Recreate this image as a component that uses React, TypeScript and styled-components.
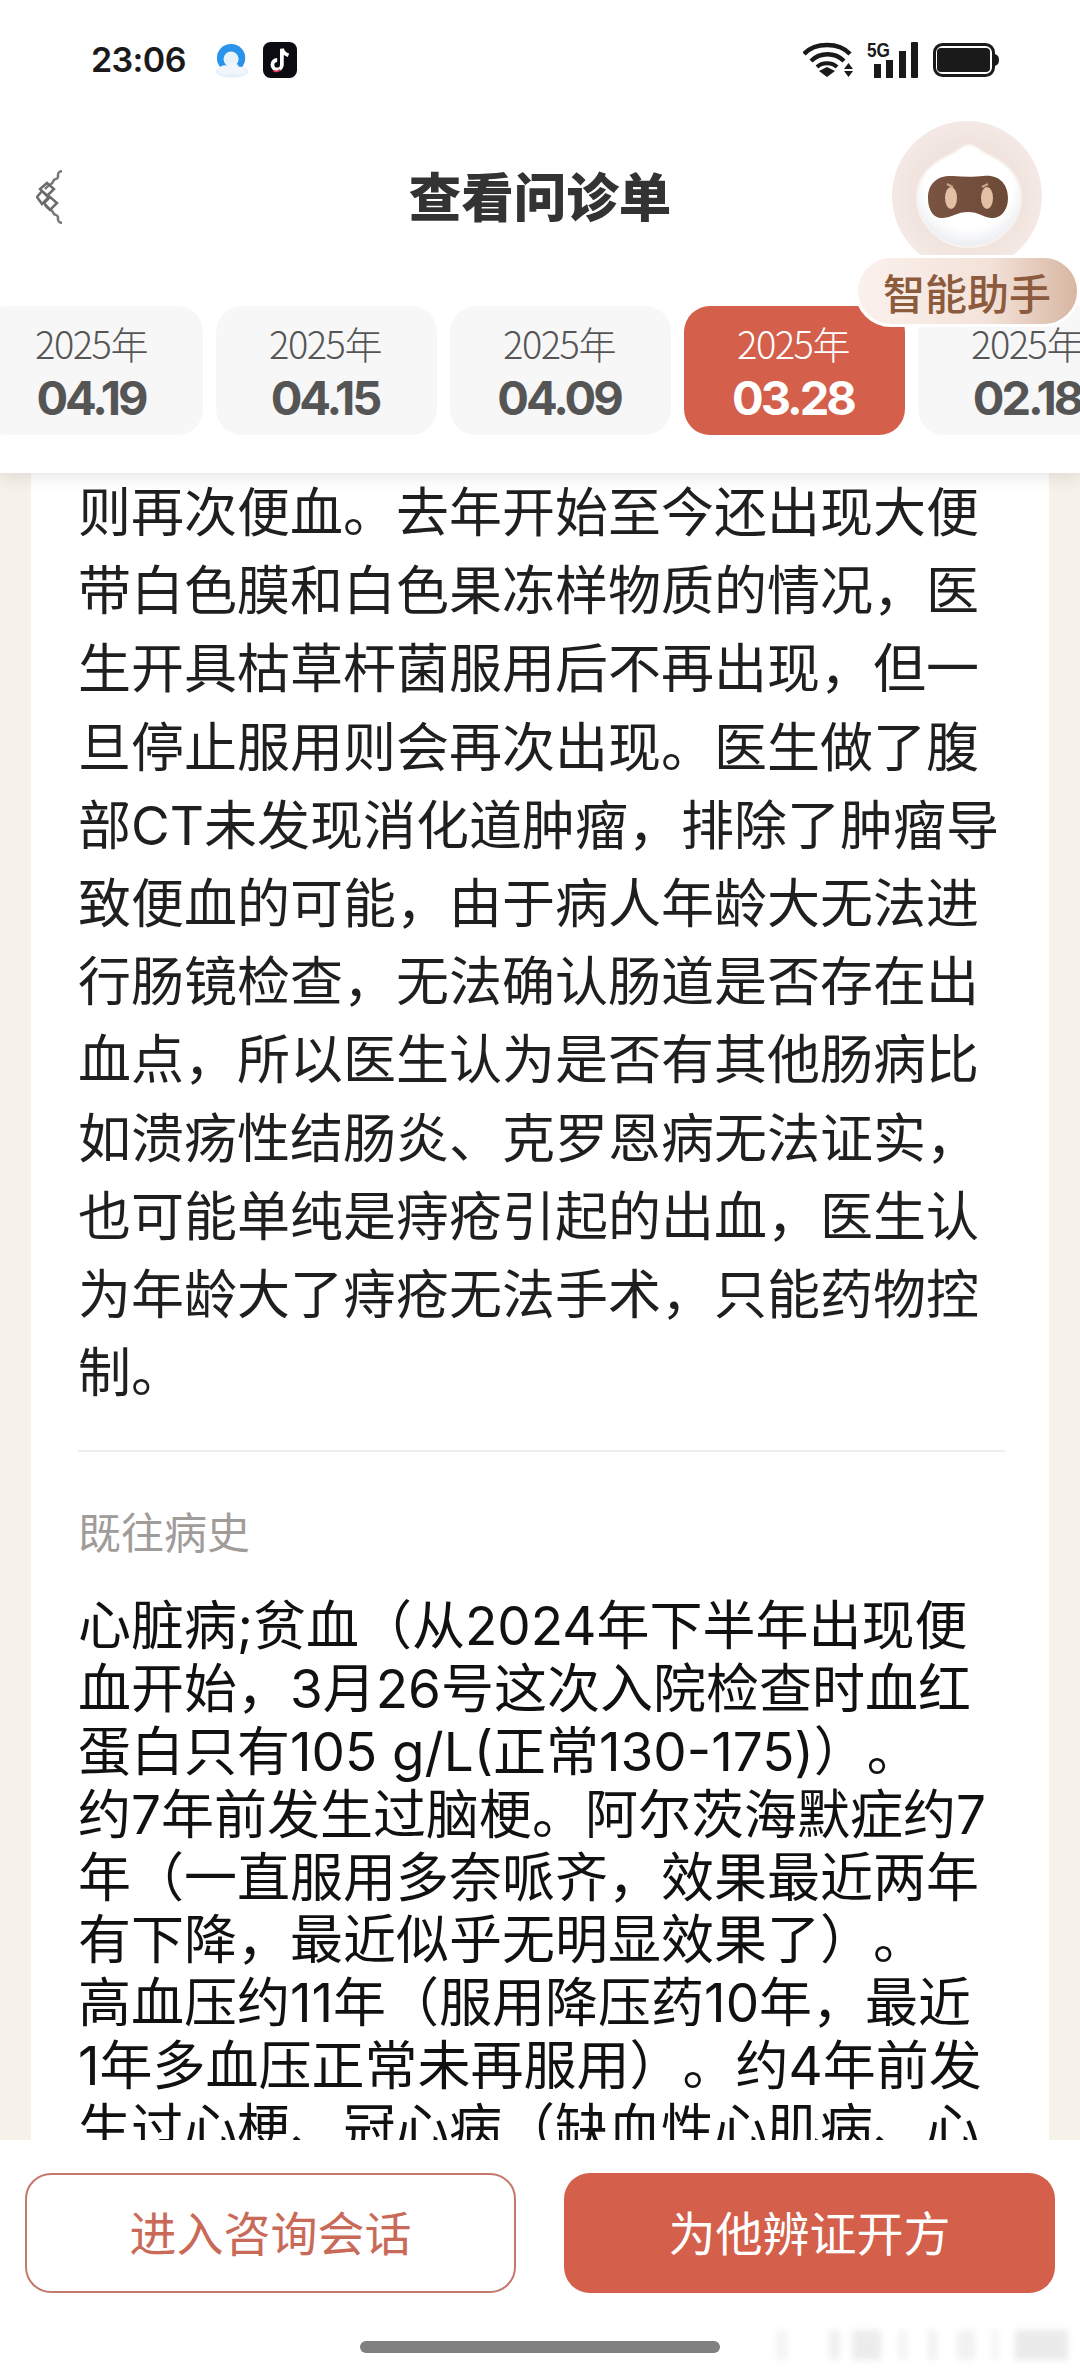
import React from "react";
import styled, { createGlobalStyle } from "styled-components";

const CJK = `"Noto Sans CJK SC", "Noto Sans", sans-serif`;
const BODY = `"Inter", "Noto Sans CJK SC", sans-serif`;
const RED = "#d4604c";

const GlobalStyle = createGlobalStyle`
  html, body {
    margin: 0;
    padding: 0;
    background: #fff;
    font-family: ${CJK};
  }
`;

const Screen = styled.div`
  position: relative;
  width: 1080px;
  height: 2374px;
  overflow: hidden;
  display: flex;
  flex-direction: column;
  background: #f6f2ea;
`;

const TopPanel = styled.div`
  position: relative;
  z-index: 2;
  flex: none;
  height: 473px;
  background: #fff;
  box-shadow: 0 4px 16px rgba(0, 0, 0, 0.1);
`;

const StatusBar = styled.div`
  height: 119px;
  padding: 0 81px 0 91px;
  box-sizing: border-box;
  display: flex;
  align-items: center;
  color: #1a1a1a;
`;

const Time = styled.span`
  font-family: "Inter", sans-serif;
  font-size: 34px;
  font-weight: 600;
  letter-spacing: -0.6px;
  width: 124px;
`;

const StatusApps = styled.div`
  display: flex;
  align-items: center;
  gap: 14px;
`;

const StatusRight = styled.div`
  margin-left: auto;
  display: flex;
  align-items: center;
  gap: 14px;
`;

const Header = styled.div`
  height: 158px;
  padding-bottom: 8px;
  box-sizing: border-box;
  display: grid;
  grid-template-columns: 1fr auto 1fr;
  align-items: center;
`;

const Title = styled.h1`
  margin: 0;
  font-size: 52.5px;
  font-weight: 900;
  color: #333;
  font-family: ${CJK};
`;

const BackIcon = styled.svg`
  margin: 6px 0 0 36px;
  justify-self: start;
`;

const Tabs = styled.div`
  display: flex;
  gap: 13px;
  margin: 29px 0 0 -18px;
  width: 1200px;
`;

const Tab = styled.div<{ $active?: boolean }>`
  flex: none;
  width: 221px;
  height: 129px;
  padding: 5px 3px 0 0;
  box-sizing: border-box;
  border-radius: 26px;
  display: flex;
  flex-direction: column;
  align-items: center;
  justify-content: center;
  background: ${(p) => (p.$active ? RED : "#f7f7f7")};
  color: ${(p) => (p.$active ? "#fff" : "#555")};
`;

const TabYear = styled.span`
  font-size: 38px;
  line-height: 50px;
  letter-spacing: -1.5px;
  font-weight: 300;
`;

const TabDate = styled.span`
  font-family: "Inter", sans-serif;
  font-size: 47px;
  line-height: 60px;
  letter-spacing: -3px;
  font-weight: 700;
`;

const Assistant = styled.div`
  position: absolute;
  z-index: 3;
  left: 854px;
  top: 120px;
  width: 226px;
  display: flex;
  flex-direction: column;
  align-items: center;
`;

const AssistantLabel = styled.div`
  margin-top: -1px;
  width: 225px;
  height: 72px;
  border-radius: 36px;
  border: 3px solid #fff;
  box-sizing: border-box;
  background: linear-gradient(90deg, #fbf1ed 0%, #f3e2d9 60%, #d8b6a2 100%);
  color: #8c5a3c;
  font-size: 42px;
  font-weight: 500;
  display: flex;
  align-items: center;
  justify-content: center;
`;

const Content = styled.main`
  flex: 1;
  min-height: 0;
  margin: 0 31px;
  padding: 0 44px 0 47px;
  background: #fff;
  overflow: hidden;
`;

const Paragraph = styled.p`
  margin: 1px 0 0;
  color: #1f1f1f;
  font-family: ${BODY};
  font-size: 53px;
  line-height: 78.2px;
`;

const Divider = styled.hr`
  margin: 38px 0 0;
  border: 0;
  border-top: 2px solid #eeeeee;
`;

const SectionLabel = styled.div`
  margin-top: 47px;
  height: 62px;
  font-size: 43px;
  line-height: 62px;
  color: #a09c9a;
`;

const HistoryText = styled.p`
  margin: 34px 0 0;
  color: #111;
  font-family: ${BODY};
  font-size: 53px;
  line-height: 62.8px;
  white-space: pre;
  text-spacing-trim: space-all;
`;

const Footer = styled.footer`
  position: relative;
  flex: none;
  height: 234px;
  background: #fff;
  padding-top: 33px;
  box-sizing: border-box;
  display: flex;
  flex-direction: column;
  align-items: center;
`;

const FooterActions = styled.div`
  align-self: stretch;
  padding: 0 25px;
  display: flex;
  justify-content: space-between;
`;

const ActionButton = styled.button<{ $primary?: boolean }>`
  width: 491px;
  height: 120px;
  border-radius: 26px;
  box-sizing: border-box;
  border: ${(p) => (p.$primary ? "none" : "2px solid #c4786c")};
  background: ${(p) => (p.$primary ? RED : "#fff")};
  color: ${(p) => (p.$primary ? "#fff" : "#c96a58")};
  font-family: ${CJK};
  font-size: 47px;
  font-weight: 400;
  padding: 0 0 5px;
`;

const HomeBar = styled.div`
  margin-top: 48px;
  width: 360px;
  height: 12px;
  border-radius: 6px;
  background: #808080;
`;

const Watermark = styled.div`
  position: absolute;
  right: 12px;
  bottom: 14px;
  width: 292px;
  height: 30px;
  opacity: 0.8;
  filter: blur(3px);
  background: linear-gradient(
    90deg,
    #f2f2f2 0 4%,
    transparent 4% 18%,
    #ececec 18% 22%,
    transparent 22% 26%,
    #e8e8e8 26% 36%,
    transparent 36% 42%,
    #f0f0f0 42% 45%,
    transparent 45% 52%,
    #ededed 52% 55%,
    transparent 55% 62%,
    #eeeeee 62% 68%,
    transparent 68% 74%,
    #f0f0f0 74% 76%,
    transparent 76% 82%,
    #e6e6e6 82% 100%
  );
`;

const dates = [
  { date: "04.19" },
  { date: "04.15" },
  { date: "04.09" },
  { date: "03.28", active: true },
  { date: "02.18" },
];

const illness = `则再次便血。去年开始至今还出现大便带白色膜和白色果冻样物质的情况，医生开具枯草杆菌服用后不再出现，但一旦停止服用则会再次出现。医生做了腹部CT未发现消化道肿瘤，排除了肿瘤导致便血的可能，由于病人年龄大无法进行肠镜检查，无法确认肠道是否存在出血点，所以医生认为是否有其他肠病比如溃疡性结肠炎、克罗恩病无法证实，也可能单纯是痔疮引起的出血，医生认为年龄大了痔疮无法手术，只能药物控制。`;

// line ends as in the app, the latin metrics differ too much to let it wrap by itself
const history = `心脏病;贫血（从2024年下半年出现便
血开始，3月26号这次入院检查时血红
蛋白只有105 g/L(正常130-175)）。
约7年前发生过脑梗。阿尔茨海默症约7
年（一直服用多奈哌齐，效果最近两年
有下降，最近似乎无明显效果了）。
高血压约11年（服用降压药10年，最近
1年多血压正常未再服用）。约4年前发
生过心梗、冠心病（缺血性心肌病、心`;

function AppIcons() {
  return (
    <StatusApps>
      <svg width="34" height="36" viewBox="0 0 36 38">
        <ellipse cx="18" cy="31" rx="17" ry="7" fill="#e8f1fa" />
        <circle cx="17" cy="17" r="15" fill="#2a93ea" />
        <circle cx="17" cy="18" r="8" fill="#e6f2fc" />
        <path d="M5 34c-4-6 2-11 8-9 2-5 11-4 12 1 6 0 9 4 7 8z" fill="#f0f6fc" />
      </svg>
      <svg width="34" height="36" viewBox="0 0 36 38">
        <rect width="36" height="38" rx="8" fill="#0b0b12" />
        <path
          d="M20 7v17a5 5 0 1 1-5-5M20 7c1 4 4 6 7 7"
          fill="none"
          stroke="#fff"
          strokeWidth="4"
        />
        <path d="M18 29a5 5 0 0 1-7 1" fill="none" stroke="#e8365d" strokeWidth="2" />
      </svg>
    </StatusApps>
  );
}

function StatusIcons() {
  return (
    <StatusRight>
      <svg width="50" height="36" viewBox="0 0 50 36">
        <path d="M1 12C12 0 36 0 47 12" fill="none" stroke="#1a1a1a" strokeWidth="4.5" />
        <path d="M8 19c9-9 24-9 33 0" fill="none" stroke="#1a1a1a" strokeWidth="4.5" />
        <path d="M14 25c5-5 15-5 20 0" fill="none" stroke="#1a1a1a" strokeWidth="4" />
        <path d="M24 35l-8-6 8-4 8 4z" fill="#1a1a1a" />
        <path d="M45.5 21l4.5 6h-9zM45.5 35l4.5-6h-9z" fill="#1a1a1a" />
      </svg>
      <svg width="52" height="36" viewBox="0 0 52 36">
        <text x="0" y="15" fontFamily="Liberation Sans" fontSize="20" fontWeight="700" fill="#1a1a1a" textLength="23" lengthAdjust="spacingAndGlyphs">
          5G
        </text>
        <rect x="7" y="22" width="7" height="14" fill="#1a1a1a" />
        <rect x="19" y="18" width="7" height="18" fill="#1a1a1a" />
        <rect x="32" y="9" width="7" height="27" fill="#1a1a1a" />
        <rect x="44" y="0" width="7" height="36" rx="1" fill="#1a1a1a" />
      </svg>
      <svg width="66" height="34" viewBox="0 0 66 34">
        <rect x="1.5" y="1.5" width="59" height="31" rx="8" fill="none" stroke="#1a1a1a" strokeWidth="3" />
        <rect x="4" y="5" width="53" height="24" rx="4" fill="#1a1a1a" />
        <path d="M62 11c3 1 4 3 4 6s-1 5-4 6z" fill="#1a1a1a" />
      </svg>
    </StatusRight>
  );
}

function Robot() {
  return (
    <svg width="152" height="136" viewBox="0 0 152 136">
      <defs>
        <linearGradient id="visor" x1="0" y1="0" x2="1" y2="0">
          <stop offset="0" stopColor="#7a5442" />
          <stop offset="1" stopColor="#6d4a38" />
        </linearGradient>
        <radialGradient id="shell" cx="0.5" cy="0.4" r="0.7">
          <stop offset="0.6" stopColor="#ffffff" />
          <stop offset="1" stopColor="#dfe2e8" />
        </radialGradient>
        <radialGradient id="halo" cx="0.5" cy="0.5" r="0.5">
          <stop offset="0.6" stopColor="#f0e2dc" />
          <stop offset="1" stopColor="#f4e9e5" />
        </radialGradient>
      </defs>
      <circle cx="76" cy="76" r="75" fill="url(#halo)" />
      <path
        d="M78 25c8 0 11 7 22 11 20 10 30 24 30 41 0 28-24 50-52 50S26 105 26 77c0-17 10-31 30-41 11-4 14-11 22-11z"
        fill="url(#shell)"
        stroke="#f8f2ef"
        strokeWidth="2"
      />
      <path
        d="M37 78C37 62 48 55 62 56c10 1 22 1 30 0 16-2 25 8 25 22 0 14-9 21-17 20-8-1-12-6-23-6s-15 5-25 6c-8 1-15-6-15-20z"
        fill="url(#visor)"
      />
      <ellipse cx="60" cy="78" rx="6" ry="11" fill="#e3bfa6" />
      <ellipse cx="96" cy="78" rx="6" ry="11" fill="#e3bfa6" />
      <path d="M56 64l6 3M91 67l6-3" stroke="#caa48c" strokeWidth="2" />
    </svg>
  );
}

export default function App() {
  return (
    <Screen>
      <GlobalStyle />
      <TopPanel>
        <StatusBar>
          <Time>23:06</Time>
          <AppIcons />
          <StatusIcons />
        </StatusBar>
        <Header>
          <BackIcon width="28" height="54" viewBox="0 0 28 54">
            <path
              d="M26 1c-5 1-4 4-4 6s-3 2-4 3-1 3-3 4-4 3-6 5M26 53c-5-1-4-4-4-6s-3-2-4-3-1-3-3-4-4-3-6-5"
              fill="none"
              stroke="#777"
              strokeWidth="2.5"
            />
            <path
              d="M11 13l7 6-7 7-7-7zM6 21l7 6-7 7-5-7zM14 27l7 6-7 7-6-7z"
              fill="none"
              stroke="#6c6c6c"
              strokeWidth="2.5"
            />
          </BackIcon>
          <Title>查看问诊单</Title>
        </Header>
        <Tabs>
          {dates.map((d) => (
            <Tab key={d.date} $active={d.active}>
              <TabYear>2025年</TabYear>
              <TabDate>{d.date}</TabDate>
            </Tab>
          ))}
        </Tabs>
      </TopPanel>
      <Assistant>
        <Robot />
        <AssistantLabel>智能助手</AssistantLabel>
      </Assistant>
      <Content>
        <Paragraph>{illness}</Paragraph>
        <Divider />
        <SectionLabel>既往病史</SectionLabel>
        <HistoryText>{history}</HistoryText>
      </Content>
      <Footer>
        <FooterActions>
          <ActionButton>进入咨询会话</ActionButton>
          <ActionButton $primary>为他辨证开方</ActionButton>
        </FooterActions>
        <HomeBar />
        <Watermark />
      </Footer>
    </Screen>
  );
}
